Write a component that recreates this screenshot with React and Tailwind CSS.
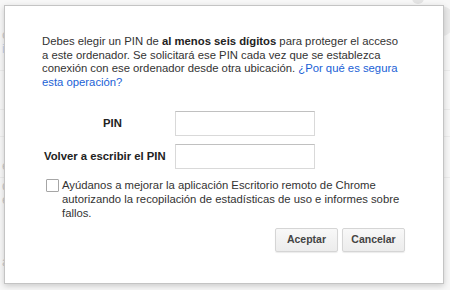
import { useState } from 'react';

export default function App() {
  const [pin, setPin] = useState('');
  const [pin2, setPin2] = useState('');
  const [stats, setStats] = useState(false);

  return (
    <div className="relative w-[450px] h-[290px] overflow-hidden bg-[#f7f7f7] font-['Liberation_Sans',Arial,sans-serif]">
      {/* faded page behind the dialog */}
      <div className="text-[13px] text-[#c9c9c9] leading-[14px]">
        <div className="h-[28px]" />
        <div className="pl-[2px]">o</div>
        <div className="pl-[2px] text-[#c5d3ec]">i</div>
        <div className="mt-[14px] border-t border-[#ececec]" />
        <div className="mt-[38px] border-t border-[#ececec]" />
        <div className="mt-[26px] border-t border-[#ececec]" />
        <div className="mt-[22px] pl-[2px]">el</div>
        <div className="mt-[4px] border-t border-[#ececec]" />
        <div className="mt-[1px] pl-[2px]">q</div>
        <div className="pl-[2px]">e</div>
        <div className="mt-[48px] pl-[2px]">a</div>
        <div className="mt-[3px] pl-[6px] text-[14px]">clic en Habilitar conexiones remotas.</div>
      </div>
      <div className="absolute right-[0px] top-[0px] w-[52px] h-[70px]">
        <div className="ml-[14px] mt-[-8px] w-[12px] h-[12px] rounded-full bg-[#e3e3e3]" />
        <div className="ml-[30px] mt-[2px] w-[26px] h-[30px] rounded-full bg-[#eaeaea]" />
      </div>

      {/* dialog */}
      <div className="absolute left-[4px] top-[5px] w-[440px] h-[279px] bg-white border border-[#c4c4c4] shadow-[0_2px_6px_rgba(0,0,0,0.18)] pl-[37px] pr-[38px] pt-[29px] text-[11.3px] text-[#333]">
        <p className="leading-[13.7px]">
          Debes elegir un PIN de <b className="text-[#222]">al menos seis dígitos</b> para proteger el acceso a este ordenador. Se solicitará ese PIN cada vez que se establezca conexión con ese ordenador desde otra ubicación.{' '}
          <a href="#" className="text-[#1a5fd6]">¿Por qué es segura esta operación?</a>
        </p>

        <div className="mt-[21px] grid grid-cols-[133px_140px] gap-y-[8px] items-center">
          <label className="text-center font-bold text-[#222] pl-[8px]">PIN</label>
          <input
            type="password"
            value={pin}
            onChange={(e) => setPin(e.target.value)}
            className="h-[25px] w-[140px] border border-[#d9d9d9] border-t-[#c0c0c0] outline-none px-1"
          />
          <label className="font-bold text-[#222] pl-[2px] whitespace-nowrap">Volver a escribir el PIN</label>
          <input
            type="password"
            value={pin2}
            onChange={(e) => setPin2(e.target.value)}
            className="h-[25px] w-[140px] border border-[#d9d9d9] border-t-[#c0c0c0] outline-none px-1"
          />
        </div>

        <label className="mt-[9px] flex items-start gap-[3px] pl-[4px]">
          <span
            onClick={() => setStats(!stats)}
            className="mt-[1px] shrink-0 w-[13px] h-[13px] border border-[#a6a6a6] bg-white rounded-[1px] flex items-center justify-center text-[10px]"
          >
            {stats ? '✓' : ''}
          </span>
          <span className="leading-[14px] text-[#333] pr-[2px]">
            Ayúdanos a mejorar la aplicación Escritorio remoto de Chrome autorizando la recopilación de estadísticas de uso e informes sobre fallos.
          </span>
        </label>

        <div className="mt-[8px] flex justify-end gap-[4px] pr-[0px]">
          <button className="h-[24px] w-[63px] rounded-[2px] border border-[#d5d5d5] bg-gradient-to-b from-[#f8f8f8] to-[#ececec] text-[10.5px] font-bold text-[#444] shadow-[0_1px_1px_rgba(0,0,0,0.08)]">
            Aceptar
          </button>
          <button className="h-[24px] w-[63px] rounded-[2px] border border-[#d5d5d5] bg-gradient-to-b from-[#f8f8f8] to-[#ececec] text-[10.5px] font-bold text-[#444] shadow-[0_1px_1px_rgba(0,0,0,0.08)]">
            Cancelar
          </button>
        </div>
      </div>
    </div>
  );
}
